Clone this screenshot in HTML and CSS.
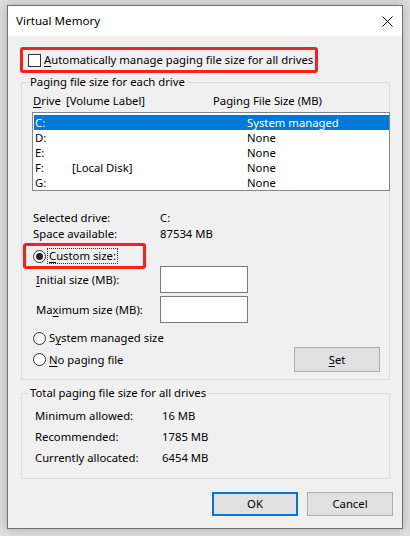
FILE: index.html
```html
<!DOCTYPE html>
<html>
<head>
<meta charset="utf-8">
<link rel="stylesheet" href="styles.css">
</head>
<body>
<div class="window">
  <div class="titlebar">
    <span class="title">Virtual Memory</span>
    <svg class="close" width="11" height="11" viewBox="0 0 11 11"><path d="M0.5 0.5 L10.5 10.5 M10.5 0.5 L0.5 10.5" stroke="#000" stroke-width="1" fill="none"/></svg>
  </div>
  <div class="content">
    <div class="highlight auto">
      <span class="checkbox"></span>
      <span class="label"><u>A</u>utomatically manage paging file size for all drives</span>
    </div>

    <div class="group group-drives">
      <div class="legend">Paging file size for each drive</div>
      <div class="list-head">
        <span class="col-drive"><u>D</u>rive</span><span class="col-vol">[Volume Label]</span><span>Paging File Size (MB)</span>
      </div>
      <div class="listbox">
        <div class="row selected"><span class="c1">C:</span><span class="c2"></span><span>System managed</span></div>
        <div class="row"><span class="c1">D:</span><span class="c2"></span><span>None</span></div>
        <div class="row"><span class="c1">E:</span><span class="c2"></span><span>None</span></div>
        <div class="row"><span class="c1">F:</span><span class="c2">[Local Disk]</span><span>None</span></div>
        <div class="row"><span class="c1">G:</span><span class="c2"></span><span>None</span></div>
      </div>
      <div class="info first"><span class="info-label">Selected drive:</span><span>C:</span></div>
      <div class="info"><span class="info-label">Space available:</span><span>87534 MB</span></div>

      <div class="highlight custom">
        <span class="radio checked"></span>
        <span class="focus"><u>C</u>ustom size:</span>
      </div>
      <div class="field first-field"><span class="field-label"><u>I</u>nitial size (MB):</span><span class="input"></span></div>
      <div class="field"><span class="field-label max">Ma<u>x</u>imum size (MB):</span><span class="input"></span></div>

      <div class="radio-row sys"><span class="radio"></span><span class="rlabel">S<u>y</u>stem managed size</span></div>
      <div class="radio-row nopage"><span class="radio"></span><span class="rlabel"><u>N</u>o paging file</span><span class="button set"><u>S</u>et</span></div>
    </div>

    <div class="group group-total">
      <div class="legend">Total paging file size for all drives</div>
      <div class="total first"><span class="total-label">Minimum allowed:</span><span>16 MB</span></div>
      <div class="total"><span class="total-label">Recommended:</span><span>1785 MB</span></div>
      <div class="total"><span class="total-label">Currently allocated:</span><span>6454 MB</span></div>
    </div>

    <div class="actions">
      <span class="button default">OK</span>
      <span class="button">Cancel</span>
    </div>
  </div>
</div>
</body>
</html>
```

FILE: styles.css
```css
* { box-sizing: border-box; }
html, body { margin: 0; padding: 0; }
body {
  background: #dedede;
  width: 410px;
  height: 536px;
  overflow: hidden;
  font-family: "Noto Sans", "Segoe UI", sans-serif;
  font-size: 11.3px;
  color: #000;
  white-space: nowrap;
}
u { text-decoration: underline; text-underline-offset: 2px; }
.window {
  margin: 5px 0 0 7px;
  width: 396px;
  height: 524px;
  border: 1px solid #6f6f6f;
  background: #f0f0f0;
  box-shadow: 0 0 10px rgba(0,0,0,0.22);
}
.titlebar {
  height: 30px;
  background: #fff;
  display: flex;
  align-items: center;
  justify-content: space-between;
  padding: 0 9px 0 8px;
}
.title { font-size: 11.6px; line-height: 16px; }
.close { display: block; margin-top: 1px; }
.content { padding-top: 11px; }

.highlight {
  border: 3px solid #f5221b;
  border-radius: 3px;
  display: flex;
  align-items: center;
}
.auto {
  margin-left: 12px;
  width: 298px;
  height: 26px;
  padding-left: 5px;
}
.checkbox {
  width: 13px; height: 13px;
  border: 1px solid #333;
  background: #fff;
  margin-top: 1px;
  margin-right: 3px;
  flex: none;
}
.label { line-height: 16px; }

.group {
  margin-left: 13px;
  width: 369px;
  border: 1px solid #dcdcdc;
}
.group-drives { margin-top: 9px; height: 298px; }
.group-total { margin-top: 13px; height: 86px; }
.legend {
  display: table;
  margin: -9px 0 0 6px;
  padding: 0 2px;
  background: #f0f0f0;
  line-height: 16px;
}
.list-head {
  margin-top: 3px;
  padding-left: 11px;
  line-height: 15px;
  display: flex;
}
.col-drive { width: 33px; }
.col-vol { width: 147px; }
.listbox {
  margin: 4px -1px 0 10px;
  height: 79px;
  border: 1px solid #828790;
  background: #fff;
  padding: 2px 0 0 1px;
}
.row {
  height: 15px;
  line-height: 15px;
  display: flex;
  padding-left: 1px;
}
.row.selected { background: #0078d7; color: #fff; }
.c1 { width: 37px; }
.c2 { width: 175px; }

.info { display: flex; line-height: 16px; padding-left: 11px; }
.info.first { margin-top: 19px; }
.info-label { width: 127px; }

.custom {
  margin: 1px 0 0 1px;
  width: 123px;
  height: 26px;
  padding-left: 7px;
}
.radio {
  width: 13px; height: 13px;
  border: 1px solid #333;
  border-radius: 50%;
  background: #fff;
  flex: none;
  position: relative;
}
.radio.checked::after {
  content: "";
  position: absolute;
  left: 2px; top: 2px;
  width: 7px; height: 7px;
  border-radius: 50%;
  background: #222;
}
.focus {
  margin-left: 2px;
  padding: 0 1px;
  line-height: 14px;
  outline: 1px dotted #333;
  outline-offset: 0;
}
.field { display: flex; align-items: center; padding-left: 14px; }
.field.first-field { margin-top: -3px; }
.field + .field { margin-top: 3px; }
.field-label { width: 124px; line-height: 16px; }
.input {
  width: 88px; height: 27px;
  border: 1px solid #7a7a7a;
  background: #fff;
}
.radio-row { display: flex; align-items: center; padding-left: 11px; }
.radio-row .rlabel { margin-left: 3px; line-height: 16px; }
.sys { margin-top: 7px; height: 16px; }
.nopage { margin-top: 1px; height: 25px; }
.button {
  display: flex;
  align-items: center;
  justify-content: center;
  width: 86px;
  height: 24px;
  border: 1px solid #adadad;
  background: #e1e1e1;
  line-height: 16px;
}
.set { margin-left: auto; margin-right: 9px; height: 25px; }

.total { display: flex; line-height: 21px; padding-left: 13px; }
.total.first { margin-top: 4px; }
.total-label { width: 127px; }

.actions {
  margin-top: 13px;
  display: flex;
  justify-content: flex-end;
  gap: 9px;
  padding-right: 9px;
}
.button.default { border: 2px solid #0078d7; }
```
